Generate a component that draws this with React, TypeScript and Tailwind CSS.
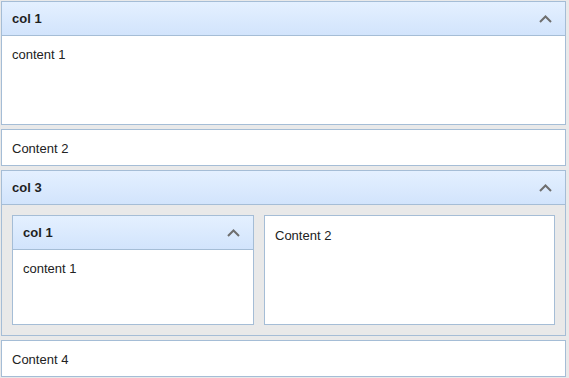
import type { ReactNode } from "react";

function Chevron() {
  return (
    <svg width="13" height="8" viewBox="0 0 13 8" className="shrink-0">
      <polyline points="1,7 6.5,1.5 12,7" fill="none" stroke="#6e6e6e" strokeWidth="2" />
    </svg>
  );
}

function Header({ title }: { title: string }) {
  return (
    <div className="flex h-[34px] items-center justify-between border-b border-[#a5bdd6] bg-gradient-to-b from-[#e4f0ff] to-[#d2e4fc] pl-[10px] pr-[13px]">
      <span className="text-[13px] font-bold text-[#1f1f1f]">{title}</span>
      <Chevron />
    </div>
  );
}

function Panel({ title, children, className = "" }: { title?: string; children: ReactNode; className?: string }) {
  return (
    <div className={`flex flex-col border border-[#a5bdd6] bg-white ${className}`}>
      {title && <Header title={title} />}
      {children}
    </div>
  );
}

export default function App() {
  return (
    <div
      className="flex min-h-screen w-[569px] flex-col gap-[4px] bg-[#e9e9e9] pl-[1px] pr-[3px] pt-[1px] text-[13px] leading-[15px] text-[#222]"
      style={{ fontFamily: '"Liberation Sans", Arial, sans-serif' }}
    >
      <Panel title="col 1" className="h-[124px]">
        <div className="flex-1 px-[10px] pt-[11px]">content 1</div>
      </Panel>

      <Panel>
        <div className="px-[10px] pb-[9px] pt-[11px]">Content 2</div>
      </Panel>

      <Panel title="col 3" className="h-[166px]">
        <div className="flex flex-1 gap-[10px] bg-[#e9e9e9] p-[10px]">
          <Panel title="col 1" className="w-[242px]">
            <div className="flex-1 px-[10px] pt-[11px]">content 1</div>
          </Panel>
          <Panel className="flex-1">
            <div className="px-[10px] pt-[12px]">Content 2</div>
          </Panel>
        </div>
      </Panel>

      <Panel>
        <div className="px-[10px] pb-[9px] pt-[11px]">Content 4</div>
      </Panel>
    </div>
  );
}
